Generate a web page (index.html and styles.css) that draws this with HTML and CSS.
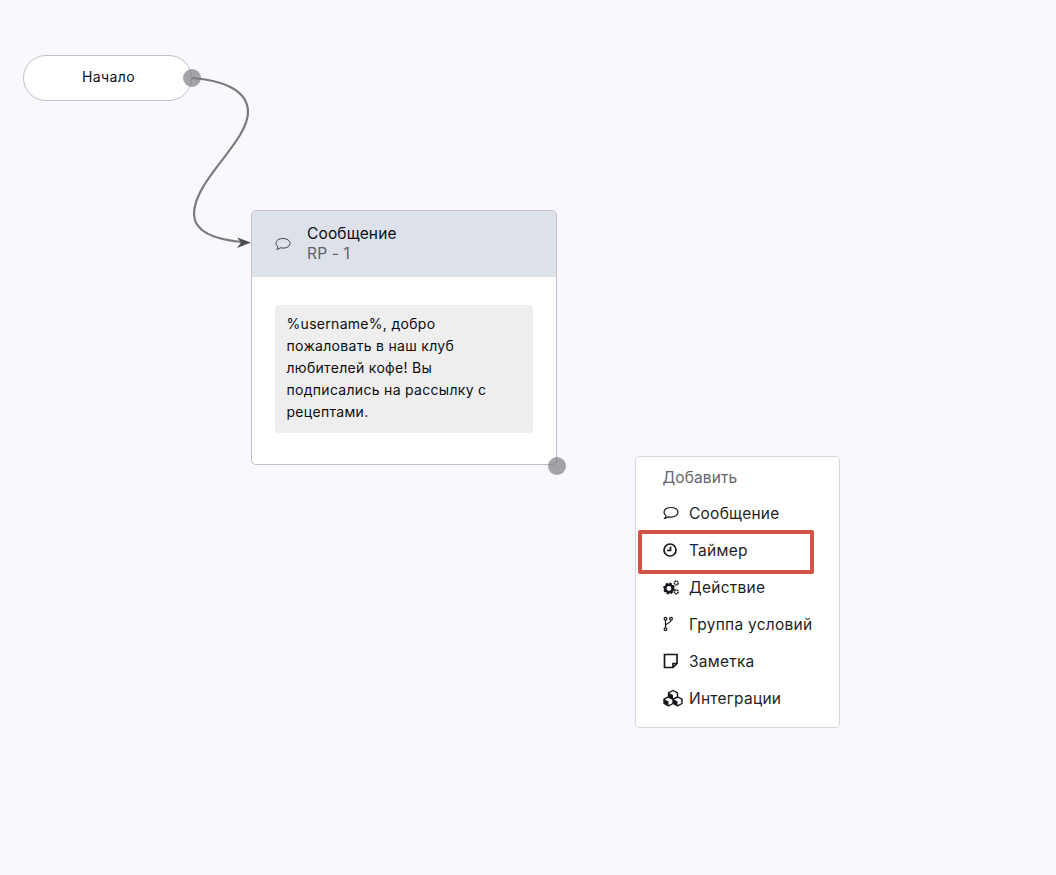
FILE: index.html
```html
<!DOCTYPE html>
<html lang="ru">
<head>
<meta charset="utf-8">
<title>Сценарий</title>
<link rel="stylesheet" href="styles.css">
</head>
<body>
<main class="canvas">
  <svg class="edges" width="1056" height="875" viewBox="0 0 1056 875">
    <path class="edge" d="M192 78 C 222 80 248 90 248 112 C 248 142 194 180 194 214 C 194 232 214 240 246 242.500"/>
    <path class="arrow" d="M251 242.500 L237 237.500 L241 242.500 L237 248 Z"/>
  </svg>

  <div class="node start">Начало<span class="handle start-handle"></span></div>

  <section class="node card">
    <header class="card-head">
      <svg class="head-icon" viewBox="0 0 16 16"><path d="M8 2.500c3.900 0 7 2 7 4.800s-3.100 4.800-7 4.800c-.9 0-1.800-.1-2.600-.3-.8.700-2 1.300-3.600 1.500.6-.7 1.100-1.500 1.200-2.500C1.900 10 1 8.800 1 7.300 1 4.500 4.100 2.500 8 2.500z"/></svg>
      <div class="head-text">
        <div class="head-title">Сообщение</div>
        <div class="head-sub">RP - 1</div>
      </div>
    </header>
    <div class="card-body">
      <p class="bubble">%username%, добро пожаловать в наш клуб любителей кофе! Вы подписались на рассылку с рецептами.</p>
    </div>
    <span class="handle card-handle"></span>
  </section>

  <nav class="node menu">
    <div class="menu-title">Добавить</div>
    <div class="menu-item">
      <svg class="icon" viewBox="0 0 16 16"><path class="line" d="M8 2.500c3.900 0 7 2 7 4.800s-3.100 4.800-7 4.800c-.9 0-1.800-.1-2.600-.3-.8.700-2 1.300-3.600 1.500.6-.7 1.100-1.500 1.200-2.500C1.900 10 1 8.800 1 7.300 1 4.500 4.100 2.500 8 2.500z"/></svg>
      <span>Сообщение</span>
    </div>
    <div class="menu-item">
      <svg class="icon" viewBox="0 0 16 16"><circle class="line thick" cx="7" cy="8" r="6"/><path class="line thick" d="M7.500 4.500v4H4"/></svg>
      <span>Таймер</span>
    </div>
    <div class="menu-item">
      <svg class="icon" viewBox="0 0 16 16"><circle class="gear" cx="6" cy="9.500" r="3.700"/><circle class="gear-hub" cx="6" cy="9.500" r="5"/><circle class="gear-sm" cx="13.300" cy="4" r="1.900"/><circle class="gear-sm" cx="13.300" cy="12.800" r="1.900"/></svg>
      <span>Действие</span>
    </div>
    <div class="menu-item">
      <svg class="icon" viewBox="0 0 16 16"><circle class="line" cx="2.500" cy="2.800" r="1.400"/><circle class="line" cx="2.500" cy="13.200" r="1.400"/><circle class="line" cx="8" cy="2.800" r="1.400"/><path class="line" d="M2.500 4.200v7.600M8 4.200c0 3-5.500 3-5.500 5.500"/></svg>
      <span>Группа условий</span>
    </div>
    <div class="menu-item">
      <svg class="icon" viewBox="0 0 16 16"><path class="line thick" d="M1.500 1.500h12.500v9l-4 4H1.500zM14 10.500h-4v4"/></svg>
      <span>Заметка</span>
    </div>
    <div class="menu-item">
      <svg class="icon wide" viewBox="0 0 20 16"><path class="cube" d="M10 .5l4.500 2.300v4.400L10 9.500 5.500 7.200V2.800zM5.500 6.800l4.500 2.300v4.400l-4.500 2.300L1 13.500V9.100zM14.500 6.800l4.500 2.300v4.400l-4.500 2.300-4.500-2.300V9.100z"/><path class="cube-dark" d="M5.500 2.800L10 5.100v4.400L5.500 7.200zM1 9.100l4.500 2.300v4.400L1 13.500zM10 9.100l4.500 2.300v4.400L10 13.500z"/></svg>
      <span>Интеграции</span>
    </div>
  </nav>

  <div class="highlight"></div>
</main>
</body>
</html>
```

FILE: styles.css
```css
* { box-sizing: border-box; }

html, body {
  margin: 0;
  height: 100%;
}

body {
  background: #faf8fe;
  font-family: Inter, "Noto Sans", sans-serif;
  color: #0c0d10;
  overflow: hidden;
}

.canvas {
  position: relative;
  width: 1056px;
  height: 875px;
}

.edges {
  position: absolute;
  left: 0;
  top: 0;
  z-index: 3;
  pointer-events: none;
}

.edge {
  fill: none;
  stroke: #7c7a80;
  stroke-width: 2.200;
}

.arrow { fill: #4f4d53; }

.node {
  position: absolute;
  background: #fff;
  border: 1px solid #c0bfc4;
}

.start {
  left: 23px;
  top: 55px;
  width: 169px;
  height: 46px;
  border-radius: 23px;
  display: flex;
  align-items: center;
  justify-content: center;
  padding: 0 0 3px 2px;
  font-size: 14px;
  letter-spacing: 0.35px;
}

.handle {
  position: absolute;
  width: 18px;
  height: 18px;
  border-radius: 50%;
  background: rgba(117, 115, 122, 0.65);
  z-index: 2;
}

.start-handle {
  right: -10px;
  top: 13px;
}

.card {
  left: 251px;
  top: 210px;
  width: 306px;
  height: 255px;
  border-radius: 5px;
}

.card-head {
  display: flex;
  align-items: center;
  gap: 16px;
  height: 66px;
  padding: 0 0 0 23px;
  background: #dde1e9;
  border-radius: 4px 4px 0 0;
}

.head-icon {
  width: 16px;
  height: 16px;
  flex: none;
  fill: none;
  stroke: #3b3f46;
  stroke-width: 1;
}

.head-title {
  font-size: 15.500px;
  line-height: 20px;
  letter-spacing: 0.15px;
  color: #0c0d10;
}

.head-sub {
  font-size: 15.500px;
  line-height: 20px;
  letter-spacing: 0.15px;
  color: #606268;
}

.card-body {
  padding: 28px 23px 0;
}

.bubble {
  margin: 0;
  width: 258px;
  height: 128px;
  padding: 8px 30px 8px 11.500px;
  background: #eeeeee;
  border-radius: 3px;
  font-size: 14px;
  line-height: 22px;
  letter-spacing: 0.3px;
}

.card-handle {
  right: -10px;
  bottom: -11px;
}

.menu {
  left: 635px;
  top: 456px;
  width: 205px;
  height: 272px;
  border-radius: 4px;
  border-color: #d6d6dc;
  padding: 2px 0 0 26.500px;
}

.menu-title {
  height: 37px;
  line-height: 37px;
  font-size: 15.500px;
  letter-spacing: 0.1px;
  color: #64666c;
}

.menu-item {
  display: flex;
  align-items: center;
  height: 37px;
  padding-bottom: 3px;
  font-size: 15.500px;
  letter-spacing: 0.25px;
  color: #1c1f25;
  white-space: nowrap;
}

.icon {
  width: 16px;
  height: 16px;
  flex: none;
  margin-right: 10.500px;
  overflow: visible;
}

.icon.wide {
  width: 20px;
  margin-right: 6.500px;
}

.line {
  fill: none;
  stroke: #15171b;
  stroke-width: 1.200;
}

.line.thick { stroke-width: 1.700; }

.gear {
  fill: none;
  stroke: #15171b;
  stroke-width: 2.600;
}

.gear-hub {
  fill: none;
  stroke: #15171b;
  stroke-width: 1.800;
  stroke-dasharray: 2.200 1.700;
}

.gear-sm {
  fill: none;
  stroke: #15171b;
  stroke-width: 1.500;
  stroke-dasharray: 1.600 .5;
}

.cube {
  fill: #fff;
  stroke: #15171b;
  stroke-width: 1.400;
  stroke-linejoin: round;
}

.cube-dark {
  fill: #15171b;
}

.highlight {
  position: absolute;
  left: 638px;
  top: 530px;
  width: 176px;
  height: 44px;
  border: 4px solid #d2524a;
  border-radius: 2px;
  z-index: 4;
}
```
